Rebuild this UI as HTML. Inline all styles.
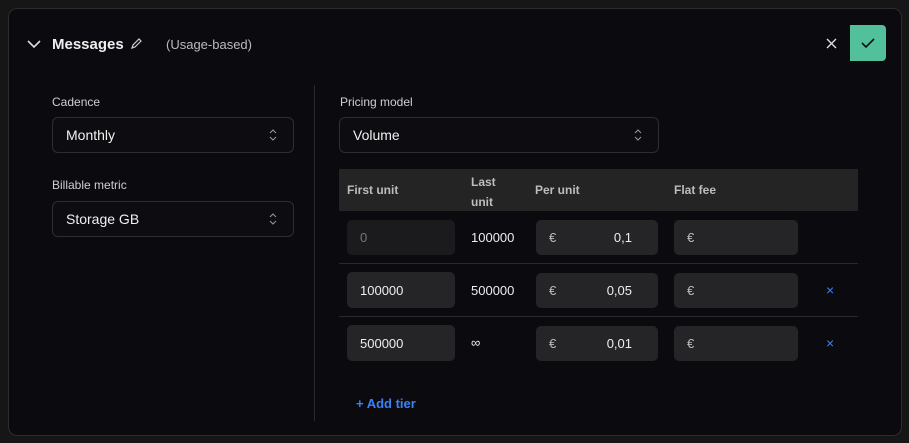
<!DOCTYPE html><html><head><style>
body{margin:0;width:909px;height:443px;background:#161616;font-family:"Liberation Sans",sans-serif;color:#e6e6e6;overflow:hidden;position:relative}
.card{position:absolute;left:8px;top:8px;width:892px;height:426px;background:#0b0b0f;border:1px solid #2c2c2e;border-radius:9px}
.a{position:absolute}
.lbl{font-size:12px;color:#cfcfcf}
.sel{position:absolute;border:1px solid #2e2e32;border-radius:6px;background:#0d0d11;font-size:14px;color:#f0f0f0;box-sizing:border-box;padding-left:13px;line-height:34px}
.sel .ar{position:absolute;right:16px;top:11px}
.inp{position:absolute;background:#252528;border-radius:5px;height:35px;font-size:13px;line-height:35px;box-sizing:border-box;padding-left:13px;color:#eee}
.hd{position:absolute;font-size:12px;color:#bdbdbd;font-weight:bold}
.t{position:absolute;font-size:13px;color:#eee}
.x{position:absolute;color:#3b82f6;font-size:14px}
</style></head><body>
<div class="card"></div>
<svg class="a" style="left:27px;top:39px" width="14" height="10"><path d="M1 2l6 6 6-6" stroke="#ddd" stroke-width="1.6" fill="none"/></svg>
<div class="a" style="left:52px;top:36px;font-size:15px;font-weight:bold;color:#eee">Messages</div>
<svg class="a" style="left:130px;top:38px" width="12" height="12"><path d="M2 10l1-3 6-6 2 2-6 6z" stroke="#ccc" stroke-width="1.2" fill="none"/></svg>
<div class="a" style="left:166px;top:37px;font-size:13px;color:#bbb">(Usage-based)</div>
<svg class="a" style="left:826px;top:38px" width="11" height="11"><path d="M1 1l9 9M10 1l-9 9" stroke="#ddd" stroke-width="1.4"/></svg>
<div class="a" style="left:850px;top:25px;width:36px;height:36px;background:#52c19b;border-radius:0 4px 4px 0"></div>
<svg class="a" style="left:861px;top:38px" width="14" height="10"><path d="M1 5l4 4 8-8" stroke="#111" stroke-width="1.6" fill="none"/></svg>
<div class="a lbl" style="left:52px;top:95px">Cadence</div>
<div class="sel" style="left:52px;top:117px;width:242px;height:36px">Monthly<svg class="ar" width="8" height="12"><path d="M1 4l3-3 3 3M1 8l3 3 3-3" stroke="#999" fill="none"/></svg></div>
<div class="a lbl" style="left:52px;top:178px">Billable metric</div>
<div class="sel" style="left:52px;top:201px;width:242px;height:36px">Storage GB<svg class="ar" width="8" height="12"><path d="M1 4l3-3 3 3M1 8l3 3 3-3" stroke="#999" fill="none"/></svg></div>
<div class="a" style="left:314px;top:85px;width:1px;height:336px;background:#2a2a2d"></div>
<div class="a lbl" style="left:340px;top:95px">Pricing model</div>
<div class="sel" style="left:339px;top:117px;width:320px;height:36px">Volume<svg class="ar" width="8" height="12"><path d="M1 4l3-3 3 3M1 8l3 3 3-3" stroke="#999" fill="none"/></svg></div>
<div class="a" style="left:339px;top:169px;width:519px;height:42px;background:#242424"></div>
<div class="hd" style="left:347px;top:183px">First unit</div>
<div class="hd" style="left:471px;top:172px;line-height:20px">Last<br>unit</div>
<div class="hd" style="left:535px;top:183px">Per unit</div>
<div class="hd" style="left:674px;top:183px">Flat fee</div>
<div class="a" style="left:339px;top:263px;width:519px;height:1px;background:#2a2a2d"></div>
<div class="a" style="left:339px;top:316px;width:519px;height:1px;background:#2a2a2d"></div>
<div class="inp" style="left:347px;top:220px;width:108px;background:#1b1b1e;color:#777">0</div>
<div class="t" style="left:471px;top:230px">100000</div>
<div class="inp" style="left:536px;top:220px;width:122px;color:#bbb">€<span style="position:absolute;right:26px;color:#eee">0,1</span></div>
<div class="inp" style="left:674px;top:220px;width:124px;color:#bbb">€</div>
<div class="inp" style="left:347px;top:272px;width:108px;height:36px;line-height:38px">100000</div>
<div class="t" style="left:471px;top:283px">500000</div>
<div class="inp" style="left:536px;top:273px;width:122px;color:#bbb">€<span style="position:absolute;right:26px;color:#eee">0,05</span></div>
<div class="inp" style="left:674px;top:273px;width:124px;color:#bbb">€</div>
<div class="x" style="left:826px;top:282px">×</div>
<div class="inp" style="left:347px;top:325px;width:108px;height:36px;line-height:38px">500000</div>
<div class="t" style="left:471px;top:335px">∞</div>
<div class="inp" style="left:536px;top:326px;width:122px;color:#bbb">€<span style="position:absolute;right:26px;color:#eee">0,01</span></div>
<div class="inp" style="left:674px;top:326px;width:124px;color:#bbb">€</div>
<div class="x" style="left:826px;top:335px">×</div>
<div class="a" style="left:356px;top:396px;font-size:13px;font-weight:bold;color:#3b82f6">+ Add tier</div>
</body></html>
